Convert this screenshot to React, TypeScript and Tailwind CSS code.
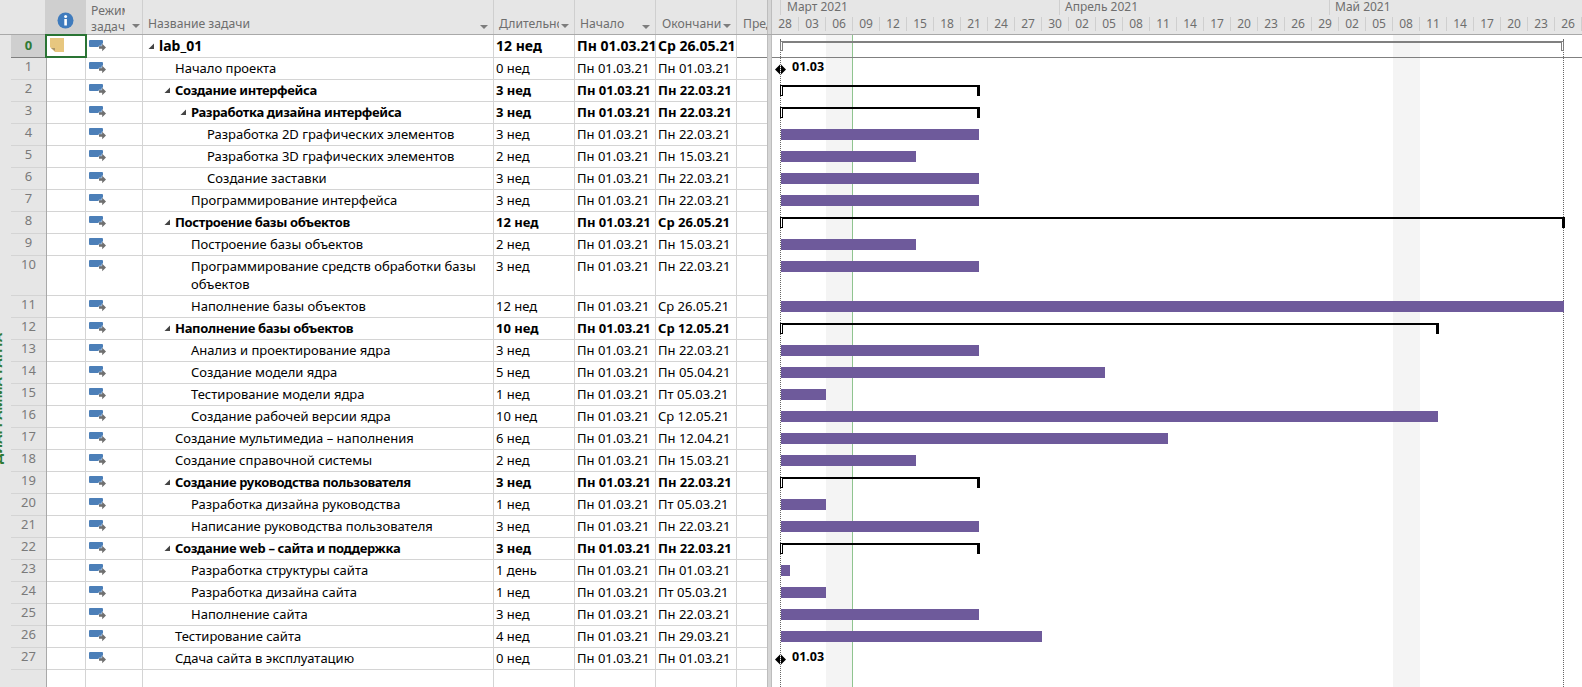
import { ReactNode } from "react";

interface Task {
  id: number;
  name: string;
  dur: string;
  start: string;
  end: string;
  level: number;
  summary?: boolean;
  milestone?: boolean;
  days: number;
  tall?: boolean;
}

const S = "Пн 01.03.21";
const M22 = "Пн 22.03.21";
const M15 = "Пн 15.03.21";
const M05 = "Пт 05.03.21";

const tasks: Task[] = [
  { id: 1, name: "Начало проекта", dur: "0 нед", start: S, end: S, level: 1, milestone: true, days: 0 },
  { id: 2, name: "Создание интерфейса", dur: "3 нед", start: S, end: M22, level: 1, summary: true, days: 22 },
  { id: 3, name: "Разработка дизайна интерфейса", dur: "3 нед", start: S, end: M22, level: 2, summary: true, days: 22 },
  { id: 4, name: "Разработка 2D графических элементов", dur: "3 нед", start: S, end: M22, level: 3, days: 22 },
  { id: 5, name: "Разработка 3D графических элементов", dur: "2 нед", start: S, end: M15, level: 3, days: 15 },
  { id: 6, name: "Создание заставки", dur: "3 нед", start: S, end: M22, level: 3, days: 22 },
  { id: 7, name: "Программирование интерфейса", dur: "3 нед", start: S, end: M22, level: 2, days: 22 },
  { id: 8, name: "Построение базы объектов", dur: "12 нед", start: S, end: "Ср 26.05.21", level: 1, summary: true, days: 87 },
  { id: 9, name: "Построение базы объектов", dur: "2 нед", start: S, end: M15, level: 2, days: 15 },
  { id: 10, name: "Программирование средств обработки базы объектов", dur: "3 нед", start: S, end: M22, level: 2, days: 22, tall: true },
  { id: 11, name: "Наполнение базы объектов", dur: "12 нед", start: S, end: "Ср 26.05.21", level: 2, days: 87 },
  { id: 12, name: "Наполнение базы объектов", dur: "10 нед", start: S, end: "Ср 12.05.21", level: 1, summary: true, days: 73 },
  { id: 13, name: "Анализ и проектирование ядра", dur: "3 нед", start: S, end: M22, level: 2, days: 22 },
  { id: 14, name: "Создание модели ядра", dur: "5 нед", start: S, end: "Пн 05.04.21", level: 2, days: 36 },
  { id: 15, name: "Тестирование модели ядра", dur: "1 нед", start: S, end: M05, level: 2, days: 5 },
  { id: 16, name: "Создание рабочей версии ядра", dur: "10 нед", start: S, end: "Ср 12.05.21", level: 2, days: 73 },
  { id: 17, name: "Создание мультимедиа – наполнения", dur: "6 нед", start: S, end: "Пн 12.04.21", level: 1, days: 43 },
  { id: 18, name: "Создание справочной системы", dur: "2 нед", start: S, end: M15, level: 1, days: 15 },
  { id: 19, name: "Создание руководства пользователя", dur: "3 нед", start: S, end: M22, level: 1, summary: true, days: 22 },
  { id: 20, name: "Разработка дизайна руководства", dur: "1 нед", start: S, end: M05, level: 2, days: 5 },
  { id: 21, name: "Написание руководства пользователя", dur: "3 нед", start: S, end: M22, level: 2, days: 22 },
  { id: 22, name: "Создание web – сайта и поддержка", dur: "3 нед", start: S, end: M22, level: 1, summary: true, days: 22 },
  { id: 23, name: "Разработка структуры сайта", dur: "1 день", start: S, end: S, level: 2, days: 1 },
  { id: 24, name: "Разработка дизайна сайта", dur: "1 нед", start: S, end: M05, level: 2, days: 5 },
  { id: 25, name: "Наполнение сайта", dur: "3 нед", start: S, end: M22, level: 2, days: 22 },
  { id: 26, name: "Тестирование сайта", dur: "4 нед", start: S, end: "Пн 29.03.21", level: 1, days: 29 },
  { id: 27, name: "Сдача сайта в эксплуатацию", dur: "0 нед", start: S, end: S, level: 1, milestone: true, days: 0 },
];

const ticks = ["28", "03", "06", "09", "12", "15", "18", "21", "24", "27", "30", "02", "05", "08", "11", "14", "17", "20", "23", "26", "29", "02", "05", "08", "11", "14", "17", "20", "23", "26"];

const DAY = 9;

function ModeIcon() {
  return (
    <svg width="18" height="12" viewBox="0 0 18 12" className="block">
      <rect x="0" y="0" width="14" height="7" rx="1" fill="#4c7fb8" />
      <path
        d="M10 6.200h3.200V3.800L17 7.500L13.200 11.200V8.800H10z"
        fill="#6f6f6f"
        stroke="#fff"
        strokeWidth="0.8"
        paintOrder="stroke"
      />
    </svg>
  );
}

function Collapse() {
  return (
    <svg width="6" height="6" viewBox="0 0 6 6" className="block">
      <path d="M6 0.500V6H0.500z" fill="#444" />
    </svg>
  );
}

function Chevron({ className }: { className: string }) {
  return (
    <svg width="8" height="4" viewBox="0 0 8 4" className={className}>
      <path d="M0 0h8L4 4z" fill="#7d7d7d" />
    </svg>
  );
}

function Diamond() {
  return (
    <svg width="11" height="11" viewBox="0 0 11 11" className="block shrink-0">
      <path d="M0 5.500L5 0.500V10.500zM6 0.500L11 5.500L6 10.500z" fill="#000" />
    </svg>
  );
}

function HeadCell({ w, children, className }: { w: string; children?: ReactNode; className?: string }) {
  return <div className={`relative shrink-0 h-full border-r border-[#cfcfcf] ${w} ${className ?? ""}`}>{children}</div>;
}

function Header() {
  return (
    <div className="flex h-[35px] bg-[#e6e6e6] border-b border-[#a9a9a9] text-[#6e6e6e] text-[12.2px] leading-[16px]">
      <div className="w-[46px] shrink-0 h-full border-r border-[#cfcfcf]" />
      <HeadCell w="w-[40px]" className="bg-[#cfcfcf] flex justify-center pt-[12px]">
        <svg width="17" height="17" viewBox="0 0 17 17">
          <circle cx="8.500" cy="8.500" r="8" fill="#3f7bbd" />
          <rect x="7.300" y="7" width="2.600" height="6.500" fill="#fff" />
          <circle cx="8.600" cy="4.600" r="1.500" fill="#fff" />
        </svg>
      </HeadCell>
      <HeadCell w="w-[57px]">
        <div className="pl-[5px] pt-[3px] w-[39px] overflow-hidden whitespace-nowrap">Режим</div>
        <div className="pl-[5px] w-[39px] overflow-hidden whitespace-nowrap">задачи</div>
        <Chevron className="absolute left-[46px] top-[24px]" />
      </HeadCell>
      <HeadCell w="w-[351px]">
        <div className="pl-[5px] pt-[16px]">Название задачи</div>
        <Chevron className="absolute left-[337px] top-[25px]" />
      </HeadCell>
      <HeadCell w="w-[81px]">
        <div className="pl-[5px] pt-[16px] w-[65px] overflow-hidden whitespace-nowrap">Длительнс</div>
        <Chevron className="absolute left-[67px] top-[24px]" />
      </HeadCell>
      <HeadCell w="w-[81px]">
        <div className="pl-[5px] pt-[16px]">Начало</div>
        <Chevron className="absolute left-[67px] top-[25px]" />
      </HeadCell>
      <HeadCell w="w-[81px]">
        <div className="pl-[6px] pt-[16px] w-[65px] overflow-hidden whitespace-nowrap">Окончани</div>
        <Chevron className="absolute left-[67px] top-[24px]" />
      </HeadCell>
      <div className="w-[30px] shrink-0 h-full overflow-hidden whitespace-nowrap pl-[6px] pt-[16px]">Пред</div>
      <div className="w-[5px] shrink-0 h-full bg-[#d6d6d6] border-x border-[#bdbdbd]" />
      <TimeScale />
    </div>
  );
}

function TimeScale() {
  return (
    <div className="w-[810px] shrink-0 h-full overflow-hidden text-[12px]">
      <div className="flex h-[15px] leading-[14px]">
        <div className="w-[8px] shrink-0" />
        <div className="w-[279px] shrink-0 border-l border-[#cfcfcf] pl-[6px]">Март 2021</div>
        <div className="w-[270px] shrink-0 border-l border-[#cfcfcf] pl-[5px]">Апрель 2021</div>
        <div className="flex-1 border-l border-[#cfcfcf] pl-[5px]">Май 2021</div>
      </div>
      <div className="flex h-[19px] items-start pt-[2px]">
        {ticks.map((t, i) => (
          <div key={i} className="w-[27px] shrink-0 h-[14px] flex items-center justify-center border-r border-[#cfcfcf]">
            <span className="leading-[14px]">{t}</span>
          </div>
        ))}
      </div>
    </div>
  );
}

function Row({
  id,
  children,
  tall,
  first,
}: {
  id: number;
  children?: ReactNode;
  tall?: boolean;
  first?: boolean;
}) {
  const line = first ? "border-[#808080]" : "border-[#d4d4d4]";
  return (
    <div className={`flex ${first ? "h-[23px]" : tall ? "h-[40px]" : "h-[22px]"}`}>
      <div className="w-[47px] shrink-0 bg-[#e6e6e6] border-r border-[#a9a9a9] pl-[11px]">
        <div
          className={`h-full border-b ${line} text-center text-[13px] ${
            first ? "bg-[#cfcfcf] text-[#2f7a35] font-bold pt-[1px] leading-[18px]" : "text-[#7a7a7a] leading-[16px]"
          }`}
        >
          {id}
        </div>
      </div>
      {children}
    </div>
  );
}

function Cell({ w, line, children, className }: { w: string; line: string; children?: ReactNode; className?: string }) {
  return (
    <div className={`shrink-0 h-full border-r border-[#d4d4d4] border-b ${line} overflow-hidden ${w} ${className ?? ""}`}>
      {children}
    </div>
  );
}

function GanttBar({ task }: { task: Task }) {
  if (task.milestone) {
    return (
      <div className="flex items-center gap-[6px] pl-[3px] pt-[1px]">
        <Diamond />
        <span className="font-bold text-[12.500px] leading-[10px] -mt-[6px]">01.03</span>
      </div>
    );
  }
  if (task.summary) {
    return (
      <div className="flex items-start ml-[8px]" style={{ width: task.days * DAY + 2 }}>
        <div className="w-[3px] h-[11px] border border-black bg-white shrink-0" />
        <div className="flex-1 h-[2px] bg-black" />
        <div className="w-[3px] h-[11px] bg-black shrink-0" />
      </div>
    );
  }
  return <div className="h-[11px] bg-[#6e5a9b] ml-[9px]" style={{ width: task.days * DAY }} />;
}

function TaskRow({ task }: { task: Task }) {
  const line = "border-[#d4d4d4]";
  return (
    <Row id={task.id} tall={task.tall}>
      <Cell w="w-[39px]" line={line} />
      <Cell w="w-[57px]" line={line} className="pl-[3px] pt-[4px]">
        <ModeIcon />
      </Cell>
      <Cell w="w-[351px]" line={line}>
        <div
          className={`flex items-start pt-[1px] leading-[18px] ${task.summary ? "font-bold tracking-[-0.35px]" : ""}`}
          style={{ paddingLeft: 5 + 16 * task.level }}
        >
          <div className="w-[11px] shrink-0 pt-[6px]">{task.summary && <Collapse />}</div>
          <div className="w-[298px]">{task.name}</div>
        </div>
      </Cell>
      <Cell w="w-[81px]" line={line} className={`pl-[2px] pt-[1px] leading-[18px] ${task.summary ? "font-bold" : ""}`}>
        {task.dur}
      </Cell>
      <Cell w="w-[81px]" line={line} className={`pl-[2px] pt-[1px] leading-[18px] whitespace-nowrap ${task.summary ? "font-bold" : ""}`}>
        {task.start}
      </Cell>
      <Cell w="w-[81px]" line={line} className={`pl-[2px] pt-[1px] leading-[18px] whitespace-nowrap ${task.summary ? "font-bold" : ""}`}>
        {task.end}
      </Cell>
      <div className={`w-[30px] shrink-0 h-full border-b ${line}`} />
      <div className="w-[5px] shrink-0 h-full bg-[#d6d6d6] border-x border-[#bdbdbd]" />
      <div className="relative w-[810px] shrink-0 pt-[5px]">
        <GanttBar task={task} />
      </div>
    </Row>
  );
}

function RootRow() {
  const line = "border-[#808080]";
  return (
    <Row id={0} first>
      <Cell w="w-[39px]" line={line} className="!overflow-visible relative">
        <div className="absolute -left-[2px] -top-[1px] w-[42px] h-[24px] border-2 border-[#2a7434] pl-[3px] pt-[2px]">
          <svg width="14" height="14" viewBox="0 0 14 14" className="block">
            <path d="M0 0h14v14H5L0 9z" fill="#e7c77f" />
            <path d="M1 10h4v3z" fill="#a8946a" />
          </svg>
        </div>
      </Cell>
      <Cell w="w-[57px]" line={line} className="pl-[3px] pt-[5px]">
        <ModeIcon />
      </Cell>
      <Cell w="w-[351px]" line={line}>
        <div className="flex items-start pl-[5px] pt-[1px] leading-[20px] font-bold text-[14px]">
          <div className="w-[11px] shrink-0 pt-[7px]">
            <Collapse />
          </div>
          lab_01
        </div>
      </Cell>
      <Cell w="w-[81px]" line={line} className="pl-[2px] pt-[1px] leading-[20px] font-bold text-[14px]">
        12 нед
      </Cell>
      <Cell w="w-[81px]" line={line} className="pl-[2px] pt-[1px] leading-[20px] font-bold text-[14px] whitespace-nowrap">
        {S}
      </Cell>
      <Cell w="w-[81px]" line={line} className="pl-[2px] pt-[1px] leading-[20px] font-bold text-[14px] whitespace-nowrap">
        Ср 26.05.21
      </Cell>
      <div className={`w-[30px] shrink-0 h-full border-b ${line}`} />
      <div className="w-[5px] shrink-0 h-full bg-[#d6d6d6] border-x border-[#bdbdbd]" />
      <div className={`relative w-[810px] shrink-0 pt-[6px] border-b ${line}`}>
        <div className="flex items-start ml-[8px] w-[784px]">
          <div className="w-[3px] h-[10px] border border-[#808080] bg-white shrink-0" />
          <div className="flex-1 h-[2px] bg-[#808080]" />
          <div className="w-[3px] h-[10px] border border-[#808080] bg-white shrink-0" />
        </div>
      </div>
    </Row>
  );
}

export default function App() {
  return (
    <div
      className="relative w-[1582px] h-[687px] overflow-hidden bg-white text-black text-[13px]"
      style={{ fontFamily: '"Noto Sans", "Open Sans", sans-serif' }}
    >
      {/* chart background: non working days, today line, project bounds */}
      <div className="absolute left-[826px] top-[35px] w-[27px] bottom-0 bg-[#f4f4f4]" />
      <div className="absolute left-[1393px] top-[35px] w-[27px] bottom-0 bg-[#f4f4f4]" />
      <div className="absolute left-[852px] top-[35px] bottom-0 w-px bg-[#8fc48f]" />
      <div className="absolute left-[780px] top-[39px] bottom-0 border-l border-dotted border-[#666]" />
      <div className="absolute left-[1563px] top-[39px] bottom-0 border-l border-dotted border-[#666]" />

      <div className="relative">
        <Header />
        <RootRow />
        {tasks.map(t => (
          <TaskRow key={t.id} task={t} />
        ))}

        <div className="flex h-[18px]">
          <div className="w-[47px] shrink-0 bg-[#e6e6e6] border-r border-[#a9a9a9]" />
          <div className="w-[39px] shrink-0 border-r border-[#d4d4d4]" />
          <div className="w-[57px] shrink-0 border-r border-[#d4d4d4]" />
          <div className="w-[351px] shrink-0 border-r border-[#d4d4d4]" />
          <div className="w-[81px] shrink-0 border-r border-[#d4d4d4]" />
          <div className="w-[81px] shrink-0 border-r border-[#d4d4d4]" />
          <div className="w-[81px] shrink-0 border-r border-[#d4d4d4]" />
          <div className="w-[30px] shrink-0" />
          <div className="w-[5px] shrink-0 bg-[#d6d6d6] border-x border-[#bdbdbd]" />
        </div>
      </div>

      {/* view bar label, mostly cut off by the window edge */}
      <div
        className="absolute -left-[10px] top-[336px] h-[128px] font-bold text-[13px] leading-[14px] text-[#2f7a35] whitespace-nowrap rotate-180"
        style={{ writingMode: "vertical-rl" }}
      >
        ДИАГРАММА ГАНТА
      </div>
    </div>
  );
}
